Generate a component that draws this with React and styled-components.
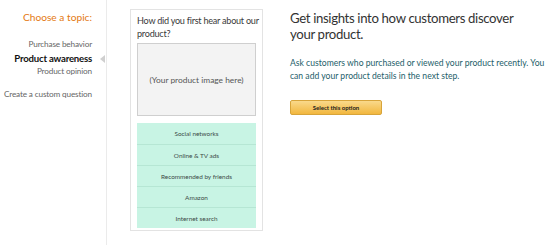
import React from "react";
import styled, { createGlobalStyle } from "styled-components";

const Global = createGlobalStyle`
  body {
    margin: 0;
    background: #fff;
    font-family: Lato, "Noto Sans", sans-serif;
  }
`;

const Page = styled.div`
  display: flex;
  width: 550px;
  height: 245px;
  overflow: hidden;
`;

const Sidebar = styled.div`
  width: 107px;
  flex-shrink: 0;
  border-right: 1px solid #ebebeb;
  box-sizing: border-box;
  padding: 10px 14px 0 0;
  text-align: right;
  white-space: nowrap;
`;

const SideTitle = styled.div`
  color: #e47911;
  font-size: 10.2px;
  line-height: 14px;
  margin-bottom: 14px;
`;

const Topic = styled.div`
  position: relative;
  line-height: 13.5px;
  color: ${(p) => (p.active ? "#111" : "#666")};
  font-weight: ${(p) => (p.active ? 700 : 400)};
  font-size: ${(p) => (p.active ? "9.6px" : "8.2px")};
  letter-spacing: ${(p) => (p.active ? "-0.2px" : "-0.15px")};
  margin-top: ${(p) => (p.gap ? "9px" : "0")};

  ${(p) =>
    p.active &&
    `
    &::after {
      content: "";
      position: absolute;
      right: -13px;
      top: 3px;
      border-style: solid;
      border-width: 4px 5px 4px 0;
      border-color: transparent #cfcfcf transparent transparent;
    }
  `}
`;

const Card = styled.div`
  margin: 9px 0 0 23px;
  width: 133px;
  height: 222px;
  box-sizing: border-box;
  border: 1px solid #e3e3e3;
  padding: 5px 6px 0;
  flex-shrink: 0;
`;

const Question = styled.div`
  font-size: 9.1px;
  letter-spacing: -0.25px;
  line-height: 12.5px;
  color: #3a3a3a;
  margin: 0 -5px 3px 0;
`;

const ImageBox = styled.div`
  height: 73px;
  box-sizing: border-box;
  background: #f3f3f3;
  border: 1px solid #cfcfcf;
  display: flex;
  align-items: center;
  justify-content: center;
  font-size: 8.4px;
  color: #555;
  margin-bottom: 7px;
`;

const Options = styled.div`
  background: #c8f4e4;
  display: flex;
  flex-direction: column;
`;

const Option = styled.div`
  height: 21px;
  display: flex;
  align-items: center;
  justify-content: center;
  font-size: 6.4px;
  color: #3c4a46;
  border-top: ${(p) => (p.first ? "none" : "1px solid #b6e6d4")};
  box-sizing: border-box;
`;

const Content = styled.div`
  margin-left: 27px;
  padding-top: 11px;
  width: 258px;
`;

const Heading = styled.h1`
  margin: 0;
  max-width: 232px;
  font-weight: 400;
  font-size: 13.2px;
  letter-spacing: -0.35px;
  line-height: 15.5px;
  color: #333;
`;

const Lead = styled.p`
  margin: 15px 0 0;
  font-size: 8.6px;
  line-height: 13px;
  color: #245e6a;
`;

const Button = styled.button`
  margin-top: 17px;
  width: 92px;
  height: 15px;
  padding: 0;
  border: 1px solid #d7a43a;
  border-radius: 2px;
  background: linear-gradient(#f9d98b, #f2b73e);
  font-family: inherit;
  font-size: 6px;
  font-weight: 700;
  color: #222;
  display: flex;
  align-items: center;
  justify-content: center;
`;

const options = [
  "Social networks",
  "Online & TV ads",
  "Recommended by friends",
  "Amazon",
  "Internet search",
];

export default function App() {
  return (
    <>
      <Global />
      <Page>
        <Sidebar>
          <SideTitle>Choose a topic:</SideTitle>
          <Topic>Purchase behavior</Topic>
          <Topic active>Product awareness</Topic>
          <Topic>Product opinion</Topic>
          <Topic gap>Create a custom question</Topic>
        </Sidebar>
        <Card>
          <Question>How did you first hear about our product?</Question>
          <ImageBox>(Your product image here)</ImageBox>
          <Options>
            {options.map((o, i) => (
              <Option key={o} first={i === 0}>
                {o}
              </Option>
            ))}
          </Options>
        </Card>
        <Content>
          <Heading>Get insights into how customers discover your product.</Heading>
          <Lead>
            Ask customers who purchased or viewed your product recently. You
            can add your product details in the next step.
          </Lead>
          <Button>Select this option</Button>
        </Content>
      </Page>
    </>
  );
}
